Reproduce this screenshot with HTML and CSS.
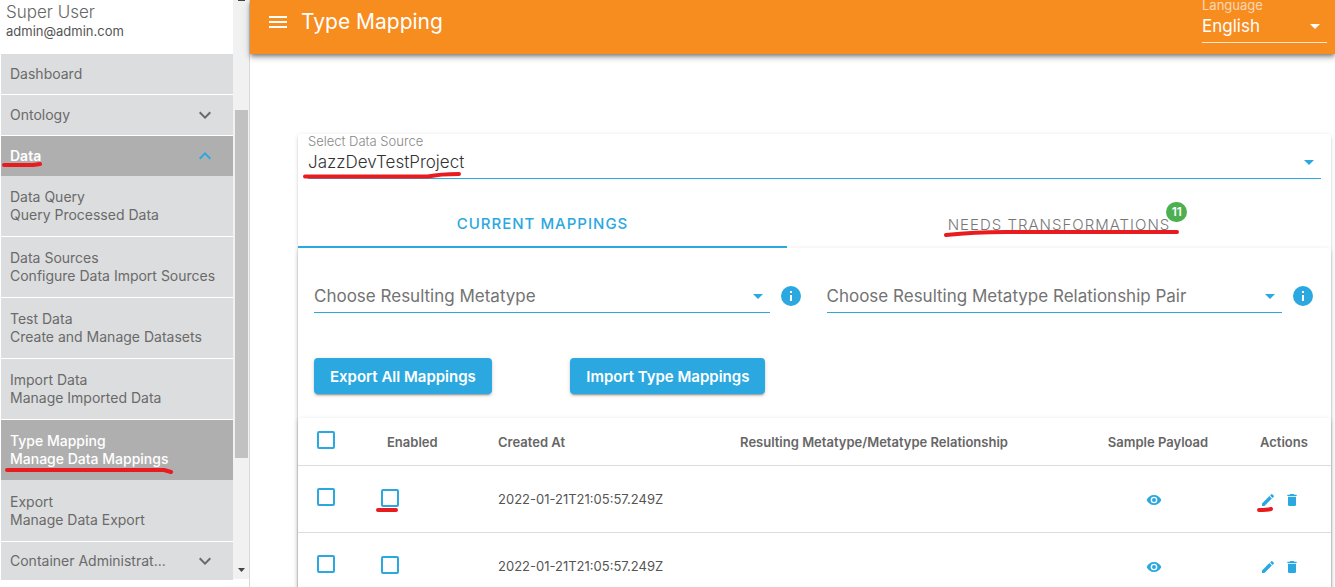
FILE: index.html
```html
<!DOCTYPE html>
<html lang="en">
<head>
<meta charset="utf-8">
<title>Type Mapping</title>
<link rel="stylesheet" href="styles.css">
</head>
<body>
<svg class="sprite" aria-hidden="true">
  <symbol id="down" viewBox="0 0 24 24"><path d="M7.41 8.59 12 13.17l4.59-4.58L18 10l-6 6-6-6z"/></symbol>
  <symbol id="up" viewBox="0 0 24 24"><path d="M7.41 15.41 12 10.83l4.59 4.58L18 14l-6-6-6 6z"/></symbol>
  <symbol id="caret" viewBox="0 0 24 24"><path d="M7 10l5 5 5-5z"/></symbol>
  <symbol id="info" viewBox="2 2 20 20"><path d="M13 9h-2V7h2m0 10h-2v-6h2M12 2a10 10 0 1 0 0 20 10 10 0 0 0 0-20z"/></symbol>
  <symbol id="eye" viewBox="0 0 24 24"><path d="M12 9a3 3 0 1 0 0 6 3 3 0 0 0 0-6m0 8a5 5 0 1 1 0-10 5 5 0 0 1 0 10m0-12.500C7 4.500 2.730 7.610 1 12c1.730 4.390 6 7.500 11 7.500s9.270-3.110 11-7.500c-1.730-4.390-6-7.500-11-7.500z"/></symbol>
  <symbol id="pencil" viewBox="0 0 24 24"><path d="M20.710 7.040c.39-.39.39-1.040 0-1.410l-2.340-2.340c-.37-.39-1.020-.39-1.410 0l-1.840 1.830 3.750 3.750M3 17.250V21h3.750L17.810 9.930l-3.750-3.750z"/></symbol>
  <symbol id="trash" viewBox="0 0 24 24"><path d="M19 4h-3.500l-1-1h-5l-1 1H5v2h14M6 19a2 2 0 0 0 2 2h8a2 2 0 0 0 2-2V7H6z"/></symbol>
</svg>
<div class="app">
  <aside class="sidebar">
    <div class="side-body">
      <div class="user">
        <div class="user-name">Super User</div>
        <div class="user-mail">admin@admin.com</div>
      </div>
      <nav class="nav">
        <a class="item" href="#">Dashboard</a>
        <a class="item" href="#">Ontology<svg class="chev"><use href="#down"/></svg></a>
        <a class="item active group" href="#">Data<svg class="chev blue"><use href="#up"/></svg>
          <svg class="mark mark-data" viewBox="0 0 42 6"><path d="M3 3H32L39 2"/></svg></a>
        <a class="item sub" href="#"><span>Data Query</span><span>Query Processed Data</span></a>
        <a class="item sub" href="#"><span>Data Sources</span><span>Configure Data Import Sources</span></a>
        <a class="item sub" href="#"><span>Test Data</span><span>Create and Manage Datasets</span></a>
        <a class="item sub" href="#"><span>Import Data</span><span>Manage Imported Data</span></a>
        <a class="item sub active" href="#"><span>Type Mapping</span><span>Manage Data Mappings</span>
          <svg class="mark mark-type" viewBox="0 0 168 6"><path d="M2 2H159L166 4"/></svg></a>
        <a class="item sub" href="#"><span>Export</span><span>Manage Data Export</span></a>
        <a class="item last" href="#">Container Administrat...<svg class="chev"><use href="#down"/></svg></a>
      </nav>
    </div>
    <div class="scrollbar">
      <svg class="sb-up" viewBox="0 0 7 1"><path d="M0 0h7v1H0z"/></svg>
      <div class="thumb"></div>
      <svg class="sb-down" viewBox="0 0 7 4"><path d="M0 0h7L3.500 4z"/></svg>
    </div>
  </aside>
  <div class="main">
    <header class="bar">
      <button class="menu" aria-label="Toggle menu"><svg viewBox="0 0 18 12"><path d="M0 0h18v2H0zM0 5h18v2H0zM0 10h18v2H0z"/></svg></button>
      <h1>Type Mapping</h1>
      <div class="lang">
        <label for="lang">Language</label>
        <div class="field"><select id="lang"><option>English</option></select><svg class="caret"><use href="#caret"/></svg></div>
      </div>
    </header>
    <main class="card">
      <div class="source">
        <label for="source">Select Data Source</label>
        <div class="field"><select id="source"><option>JazzDevTestProject</option></select><svg class="caret"><use href="#caret"/></svg>
          <svg class="mark mark-source" viewBox="0 0 160 8"><path d="M3 5.500H126Q138 3 157 3"/></svg></div>
      </div>
      <div class="tabs" role="tablist">
        <button class="tab selected" role="tab" aria-selected="true">CURRENT MAPPINGS</button>
        <button class="tab" role="tab" aria-selected="false"><span class="tab-text">NEEDS TRANSFORMATIONS<span class="badge">11</span>
          <svg class="mark mark-needs" viewBox="0 0 236 8"><path d="M2 6Q30 3 62 3H233"/></svg></span></button>
      </div>
      <section class="panel">
        <div class="filters">
          <div class="filter">
            <div class="field"><select aria-label="Resulting Metatype"><option>Choose Resulting Metatype</option></select><svg class="caret"><use href="#caret"/></svg></div>
            <button class="info" aria-label="Metatype help"><svg><use href="#info"/></svg></button>
          </div>
          <div class="filter">
            <div class="field"><select aria-label="Resulting Metatype Relationship Pair"><option>Choose Resulting Metatype Relationship Pair</option></select><svg class="caret"><use href="#caret"/></svg></div>
            <button class="info" aria-label="Relationship pair help"><svg><use href="#info"/></svg></button>
          </div>
        </div>
        <div class="actions">
          <button class="btn">Export All Mappings</button>
          <button class="btn">Import Type Mappings</button>
        </div>
        <table class="grid">
          <colgroup><col class="c-pick"><col class="c-enabled"><col class="c-created"><col><col class="c-sample"><col class="c-actions"></colgroup>
          <thead>
            <tr><th class="pick"><input type="checkbox" aria-label="Select all"></th><th>Enabled</th><th>Created At</th><th class="mid">Resulting Metatype/Metatype Relationship</th><th class="mid">Sample Payload</th><th class="last-col">Actions</th></tr>
          </thead>
          <tbody>
            <tr>
              <td class="pick"><input type="checkbox" aria-label="Select row 1"></td>
              <td class="enabled"><span class="marked"><input type="checkbox" aria-label="Enabled, row 1"><svg class="mark mark-check" viewBox="0 0 22 4"><path d="M2 2H20"/></svg></span></td>
              <td>2022-01-21T21:05:57.249Z</td><td></td>
              <td class="sample"><button class="icon" aria-label="View payload"><svg><use href="#eye"/></svg></button></td>
              <td class="last-col"><div class="tools"><button class="icon" aria-label="Edit"><svg><use href="#pencil"/></svg><svg class="mark mark-edit" viewBox="0 0 16 5"><path d="M2 3Q10 3 14 2"/></svg></button><button class="icon" aria-label="Delete"><svg><use href="#trash"/></svg></button></div></td>
            </tr>
            <tr>
              <td class="pick"><input type="checkbox" aria-label="Select row 2"></td>
              <td class="enabled"><span class="marked"><input type="checkbox" aria-label="Enabled, row 2"></span></td>
              <td>2022-01-21T21:05:57.249Z</td><td></td>
              <td class="sample"><button class="icon" aria-label="View payload"><svg><use href="#eye"/></svg></button></td>
              <td class="last-col"><div class="tools"><button class="icon" aria-label="Edit"><svg><use href="#pencil"/></svg></button><button class="icon" aria-label="Delete"><svg><use href="#trash"/></svg></button></div></td>
            </tr>
          </tbody>
        </table>
      </section>
    </main>
  </div>
</div>
</body>
</html>
```
FILE: styles.css
```css
:root {
  --blue: #2ba8e0;
  --orange: #f78c1f;
  --red: #e81c1e;
  --shadow: 0 3px 1px -2px rgba(0, 0, 0, .2), 0 2px 2px 0 rgba(0, 0, 0, .14), 0 1px 5px 0 rgba(0, 0, 0, .12);
}
* { box-sizing: border-box; }
body {
  margin: 0;
  height: 100vh;
  overflow: hidden;
  background: #fff;
  color: #666;
  font-family: Inter, "Open Sans", sans-serif;
  font-size: 14px;
}
button, select, input { font: inherit; color: inherit; margin: 0; }
button { border: 0; padding: 0; background: none; cursor: pointer; }
svg { display: block; fill: currentColor; }
.sprite { position: absolute; width: 0; height: 0; }
.mark { position: absolute; fill: none; stroke: var(--red); stroke-width: 4; stroke-linecap: round; stroke-linejoin: round; pointer-events: none; }

.app { display: flex; height: 100%; }
.sidebar { display: flex; flex: 0 0 250px; align-items: flex-start; border-right: 1px solid #d8d8d8; }
.side-body { flex: 1; padding-left: 1px; min-width: 0; }
.user { height: 54px; padding: 2px 5px 0; }
.user-name { font-size: 17px; line-height: 20px; font-weight: 300; }
.user-mail { font-size: 13px; line-height: 18px; color: #555; }
.item {
  position: relative;
  display: flex;
  align-items: center;
  justify-content: space-between;
  height: 41px;
  padding: 0 16px 0 9px;
  background: #dcddde;
  border-bottom: 1px solid #fff;
  color: #6a6a6a;
  line-height: 18px;
  text-decoration: none;
  white-space: nowrap;
}
.sub { flex-direction: column; align-items: flex-start; justify-content: center; height: 61px; }
.active { background: #afafaf; border-bottom-color: #dcddde; color: #fff; font-weight: 500; }
.group { height: 40px; border-bottom: 0; font-weight: 600; }
.last { height: 38px; border-bottom: 0; }
.chev { width: 24px; height: 24px; }
.blue { color: var(--blue); }
.mark-data { left: 0; top: 26px; width: 42px; height: 6px; }
.mark-type { left: 4px; bottom: 6px; width: 168px; height: 6px; }
.scrollbar { display: flex; flex-direction: column; align-items: center; flex: 0 0 16px; height: 579px; padding: 0 1px 7px 2px; background: #f1f1f1; }
.sb-up { width: 7px; height: 1px; color: #444; }
.thumb { width: 100%; height: 348px; margin-top: 109px; background: #c1c1c1; }
.sb-down { width: 7px; height: 4px; margin-top: auto; color: #444; }

.main { flex: 1; min-width: 0; }
.bar {
  display: flex;
  align-items: flex-start;
  height: 54px;
  padding: 0 8px 0 19px;
  background: var(--orange);
  color: #fff;
  box-shadow: 0 2px 4px -1px rgba(0, 0, 0, .4), 0 4px 5px 0 rgba(0, 0, 0, .2), 0 1px 10px 0 rgba(0, 0, 0, .12);
}
.menu { margin: 16px 14px 0 0; }
.menu svg { width: 18px; height: 12px; }
h1 { margin: 8px 0 0; font-size: 21px; line-height: 28px; font-weight: 400; }
.lang { width: 125px; margin-left: auto; }
label { display: block; font-size: 13px; line-height: 16px; font-weight: 300; }
.lang label { margin-top: -3px; font-weight: 400; opacity: .65; }
.field { position: relative; flex: 1; min-width: 0; }
select {
  display: block;
  width: 100%;
  height: 34px;
  padding: 0 32px 0 0;
  border: 0;
  border-bottom: 1px solid var(--blue);
  border-radius: 0;
  background: none;
  appearance: none;
  outline: 0;
  font-size: 17px;
}
.caret { position: absolute; right: 0; top: 5px; width: 24px; height: 24px; color: var(--blue); pointer-events: none; }
.lang select { height: 30px; padding-bottom: 4px; border-color: rgba(255, 255, 255, .8); }
.lang .caret { top: 1px; color: #fff; }

.card { margin: 80px 4px 0 48px; border-radius: 4px; box-shadow: var(--shadow); }
.source { padding: 0 10px; }
.source label { color: #888; line-height: 15px; }
.source select { height: 30px; padding-bottom: 4px; font-weight: 300; color: #333; }
.source .caret { top: 1px; }
.mark-source { left: -6px; bottom: 0; width: 160px; height: 8px; }
.tabs { display: flex; height: 48px; margin-top: 21px; }
.tab { flex: 544; color: #777; font-size: 15px; font-weight: 300; letter-spacing: 1px; }
.selected { flex: 489; border-bottom: 2px solid var(--blue); color: var(--blue); font-weight: 500; }
.tab-text { position: relative; }
.badge {
  position: absolute;
  left: 100%;
  bottom: 12px;
  margin-left: -4px;
  width: 21px;
  height: 20px;
  border-radius: 10px;
  background: #4caf50;
  color: #fff;
  font-size: 12px;
  line-height: 20px;
  font-weight: 600;
  letter-spacing: 0;
}
.mark-needs { left: -4px; bottom: -3px; width: 236px; height: 8px; }

.panel { border-radius: 4px; box-shadow: var(--shadow); }
.filters { display: grid; grid-template-columns: 1fr 1fr; gap: 24px; padding: 31px 16px 45px; }
.filter { display: flex; align-items: center; gap: 11px; padding-right: 2px; }
.filter select { color: #737373; }
.info { color: var(--blue); }
.info svg { width: 20px; height: 20px; }
.actions { display: grid; grid-template-columns: repeat(4, 1fr); gap: 24px; padding: 0 16px 24px; justify-items: start; }
.btn { height: 36px; padding: 0 16px; border-radius: 4px; background: var(--blue); color: #fff; font-size: 15px; font-weight: 600; white-space: nowrap; box-shadow: var(--shadow); }

.grid { width: 100%; table-layout: fixed; border-collapse: separate; border-spacing: 0; border-radius: 4px; box-shadow: var(--shadow); }
.c-pick { width: 73px; }
.c-enabled { width: 111px; }
.c-created { width: 192px; }
.c-sample { width: 168px; }
.c-actions { width: 89px; }
th, td { padding: 0 0 0 16px; border-bottom: 1px solid #ddd; text-align: left; white-space: nowrap; }
th { height: 48px; font-size: 13px; font-weight: 600; }
td { height: 67px; color: #555; font-size: 13px; }
.mid { text-align: center; padding: 0; }
.pick { padding: 0 0 4px 19px; }
.enabled { padding: 0 0 2px 10px; }
.sample { padding: 0 8px 0 0; text-align: center; }
.last-col { padding-left: 18px; }
input { display: block; width: 18px; height: 18px; border: 2px solid var(--blue); border-radius: 2px; background: none; appearance: none; }
.marked { position: relative; display: block; width: 18px; }
.mark-check { left: -5px; top: 19px; width: 22px; height: 4px; }
.tools { display: flex; gap: 8px; padding-top: 2px; }
.icon { position: relative; color: var(--blue); vertical-align: middle; }
.icon svg { width: 16px; height: 16px; }
.icon .mark-edit { left: -3px; top: 15px; width: 16px; height: 5px; }
```
